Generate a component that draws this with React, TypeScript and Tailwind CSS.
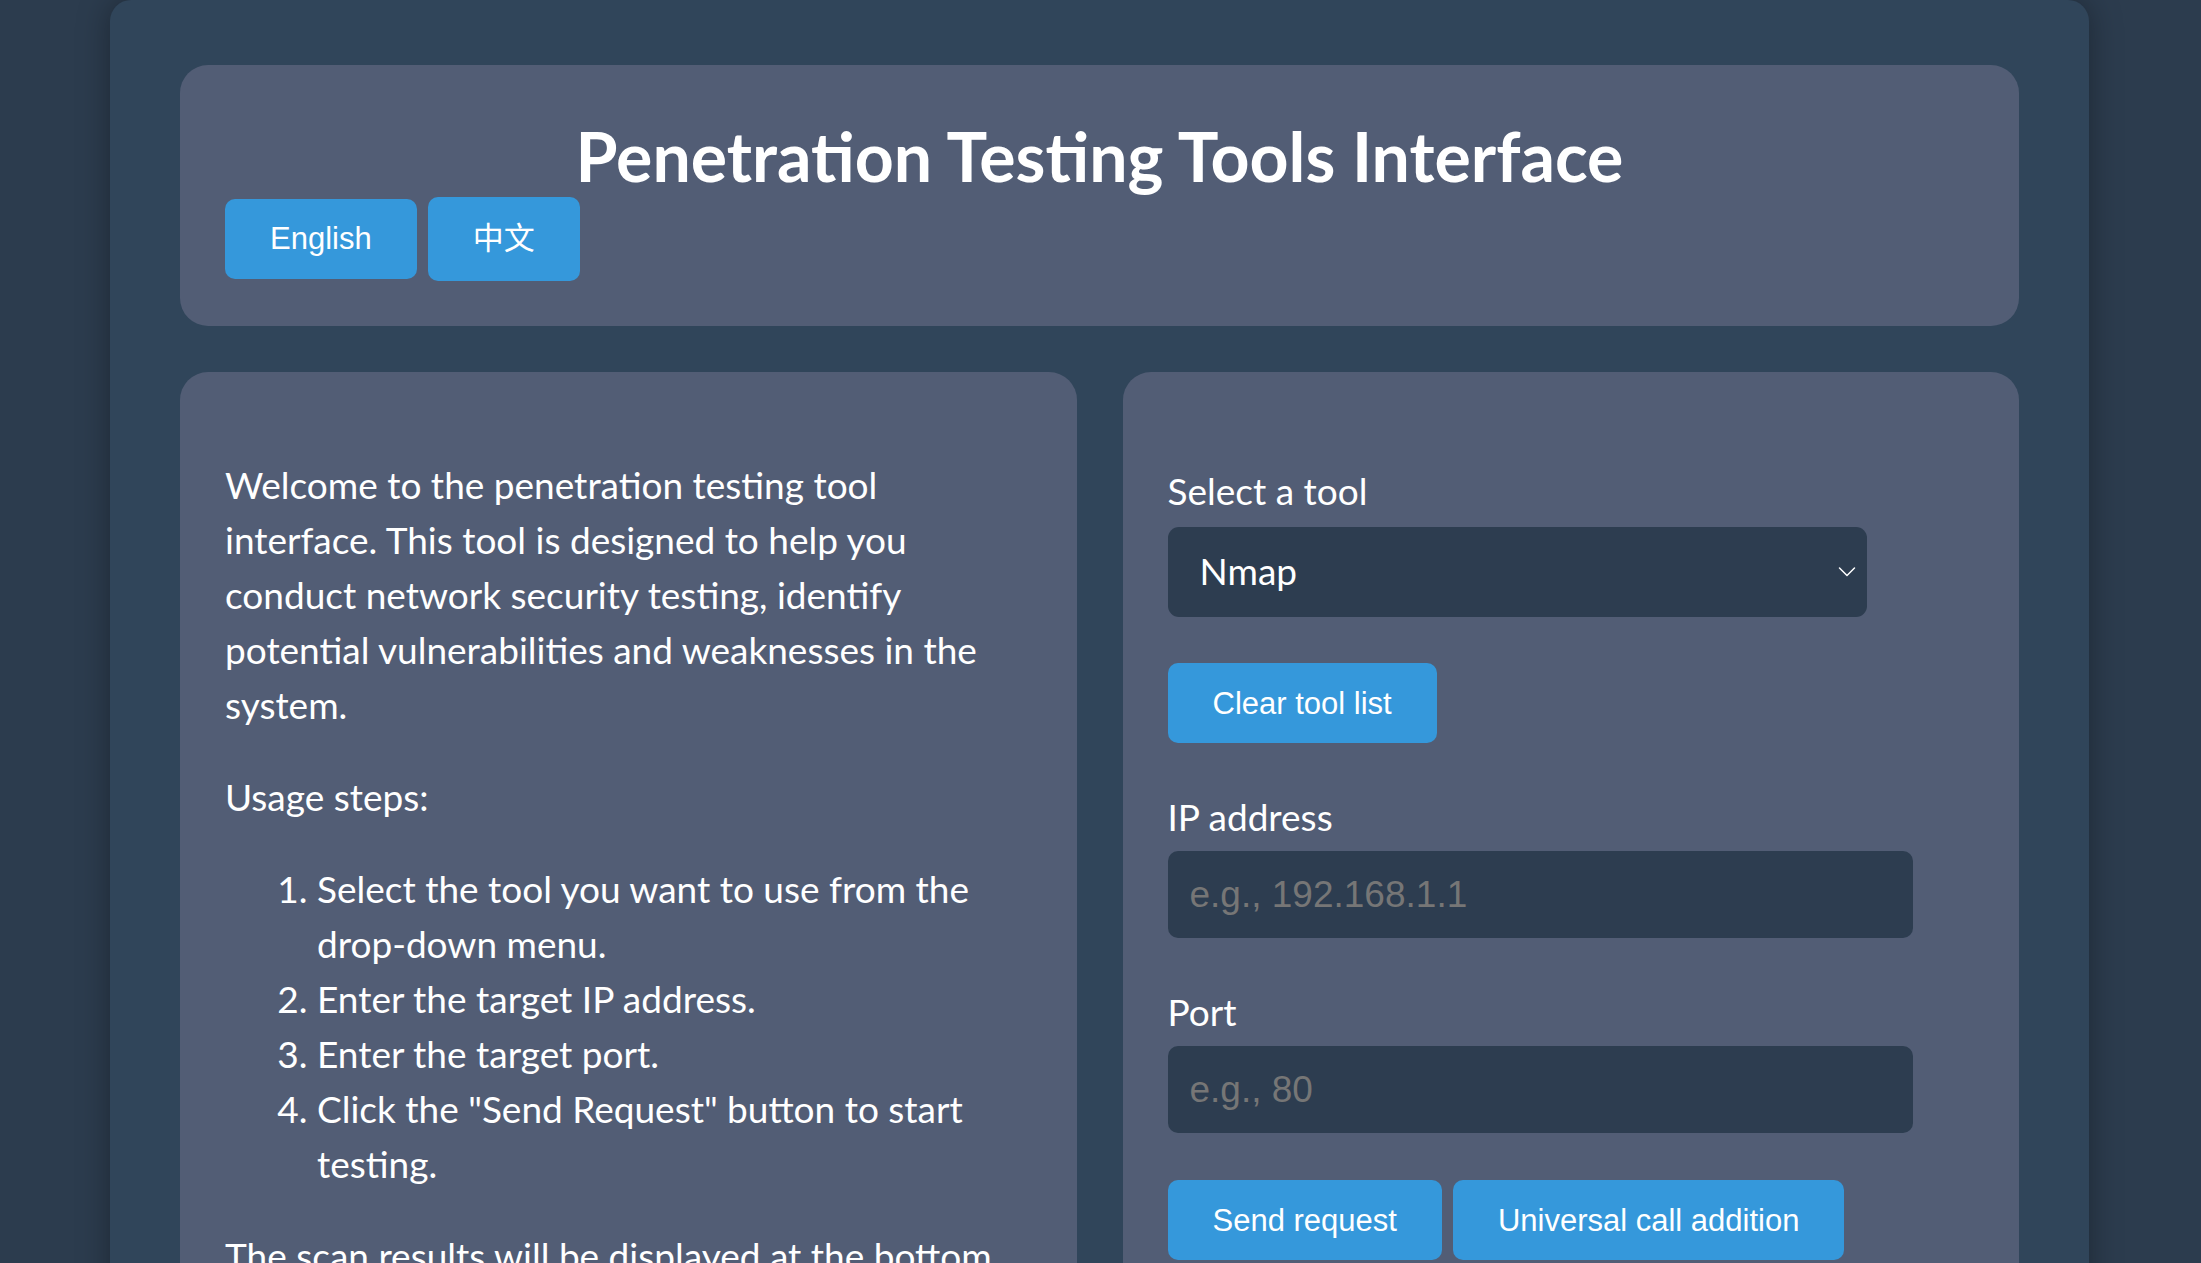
import React from "react";

function Chevron() {
  return (
    <svg width="18" height="11" viewBox="0 0 18 11" fill="none" className="pointer-events-none absolute right-[11px] top-1/2 -translate-y-1/2">
      <polyline points="1.5,1.5 9,9 16.5,1.5" stroke="#ffffff" strokeWidth="1.5" strokeLinecap="round" strokeLinejoin="round" />
    </svg>
  );
}

export default function App() {
  return (
    <div className="min-h-screen bg-[#2c3c4e] font-['Lato',sans-serif] text-white">
      <div className="ml-[110px] min-h-[1263px] w-[1979px] rounded-[21px] bg-[#30455a] px-[70px] pb-[65px] pt-[65px] shadow-[0_0_32px_rgba(0,0,0,0.35)]">
        <header className="rounded-[28px] bg-[#525d75] p-[45px]">
          <h1 className="h-[87px] pt-[12px] text-center text-[68px] font-bold leading-[68px] text-white">
            Penetration Testing Tools Interface
          </h1>
          <div className="flex items-center gap-[11px]">
            <button className="flex h-[80px] items-center rounded-[10px] bg-[#3598db] px-[45px] font-['Liberation_Sans',sans-serif] text-[31px] text-white">
              English
            </button>
            <button className="flex h-[84px] items-center rounded-[10px] bg-[#3598db] px-[45px] font-['Liberation_Sans','Noto_Sans_CJK_SC',sans-serif] text-[31px] text-white">
              中文
            </button>
          </div>
        </header>

        <div className="mt-[46px] grid grid-cols-2 gap-[46px]">
          <section className="rounded-[28px] bg-[#525d75] px-[45px] pb-[45px] pt-[85px] text-[37px] leading-[55px]">
            <p>
              Welcome to the penetration testing tool interface. This tool is designed to help you conduct network
              security testing, identify potential vulnerabilities and weaknesses in the system.
            </p>
            <p className="mt-[37px]">Usage steps:</p>
            <ol className="mt-[37px] list-decimal pl-[92px]">
              <li>Select the tool you want to use from the drop-down menu.</li>
              <li>Enter the target IP address.</li>
              <li>Enter the target port.</li>
              <li>Click the "Send Request" button to start testing.</li>
            </ol>
            <p className="mt-[37px]">The scan results will be displayed at the bottom of the page.</p>
          </section>

          <section className="rounded-[28px] bg-[#525d75] px-[45px] pb-[45px] pt-[91px] text-[37px] leading-[55px]">
            <label className="block h-[55px]">Select a tool</label>
            <div className="relative mt-[9px] w-[699px]">
              <select className="h-[90px] w-full appearance-none rounded-[11px] bg-[#2d3d50] pb-[4px] pl-[32px] font-['Lato',sans-serif] text-[37px] text-white outline-none">
                <option>Nmap</option>
              </select>
              <Chevron />
            </div>

            <button className="mt-[46px] flex h-[80px] items-center rounded-[10px] bg-[#3598db] px-[45px] font-['Liberation_Sans',sans-serif] text-[31px] text-white">
              Clear tool list
            </button>

            <label className="mt-[46px] block h-[55px]">IP address</label>
            <input
              placeholder="e.g., 192.168.1.1"
              className="mt-[7px] block h-[87px] w-[745px] rounded-[10px] bg-[#2d3d50] px-[22px] font-['Liberation_Sans',sans-serif] text-[37px] text-white outline-none placeholder:text-[#767676]"
            />

            <label className="mt-[46px] block h-[55px]">Port</label>
            <input
              placeholder="e.g., 80"
              className="mt-[7px] block h-[87px] w-[745px] rounded-[10px] bg-[#2d3d50] px-[22px] font-['Liberation_Sans',sans-serif] text-[37px] text-white outline-none placeholder:text-[#767676]"
            />

            <div className="mt-[47px] flex items-center gap-[11px]">
              <button className="flex h-[80px] items-center rounded-[10px] bg-[#3598db] px-[45px] font-['Liberation_Sans',sans-serif] text-[31px] text-white">
                Send request
              </button>
              <button className="flex h-[80px] items-center rounded-[10px] bg-[#3598db] px-[45px] font-['Liberation_Sans',sans-serif] text-[31px] text-white">
                Universal call addition
              </button>
            </div>
          </section>
        </div>
      </div>
    </div>
  );
}
